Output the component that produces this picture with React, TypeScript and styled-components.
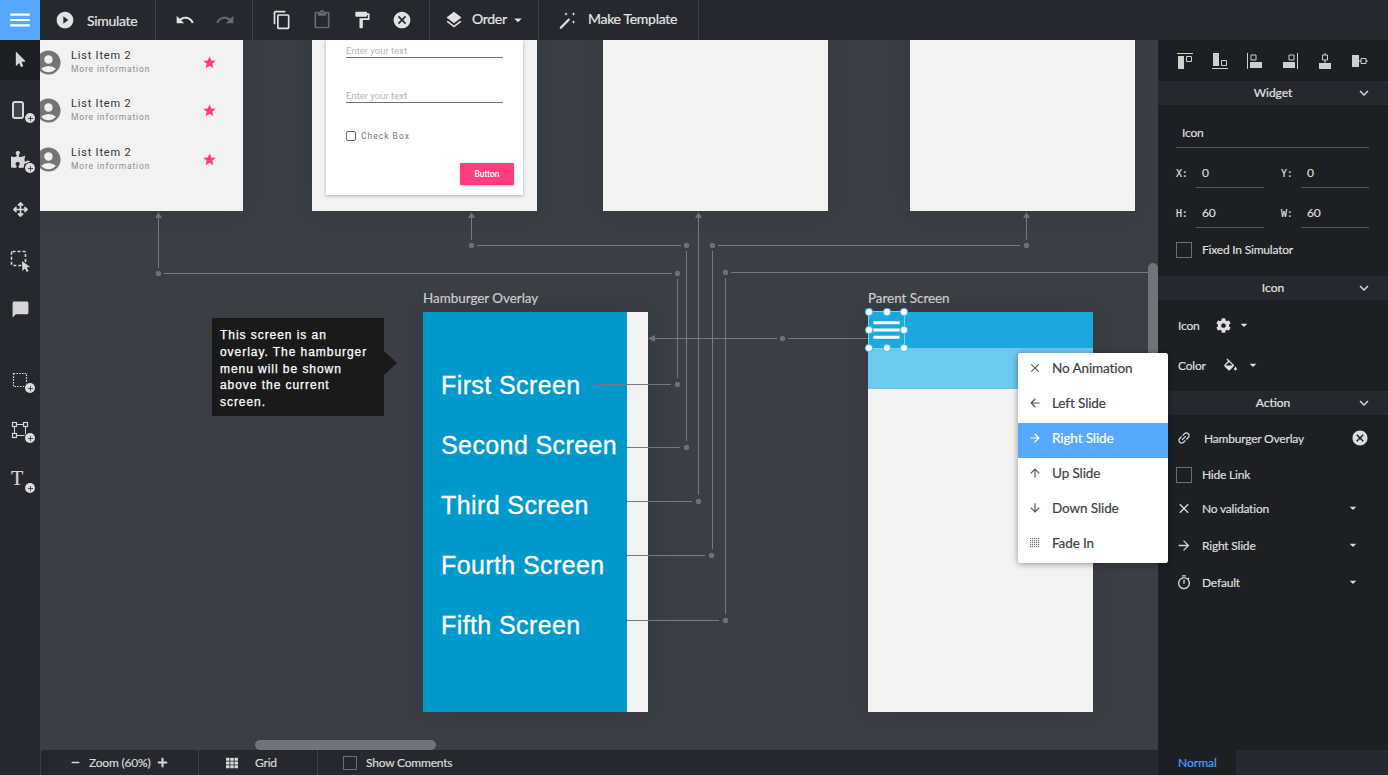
import React from 'react';
import styled, { createGlobalStyle } from 'styled-components';
import {
    MdAccountCircle,
    MdArrowBack,
    MdArrowDownward,
    MdArrowDropDown,
    MdArrowForward,
    MdArrowUpward,
    MdAdd,
    MdCancel,
    MdChatBubble,
    MdClose,
    MdContentCopy,
    MdContentPaste,
    MdFormatPaint,
    MdKeyboardArrowDown,
    MdLayers,
    MdLink,
    MdMenu,
    MdOutlineTimer,
    MdPlayCircleFilled,
    MdRedo,
    MdStar,
    MdUndo,
} from 'react-icons/md';
import { FaArrowsAlt, FaCog, FaMinus, FaMousePointer, FaPlus, FaPuzzlePiece, FaTh } from 'react-icons/fa';

const UI_FONT = `Lato, "Noto Sans", sans-serif`;
const PANEL = '#1c2025';
const BAR = '#25292f';
const ICON = '#e2e2e2';

const GlobalStyle = createGlobalStyle`
    html, body {
        margin: 0;
        padding: 0;
        height: 100%;
        overflow: hidden;
        background: #3a3e45;
    }
    * {
        box-sizing: border-box;
    }
`;

const Page = styled.div`
    position: relative;
    display: grid;
    grid-template-columns: 40px 1fr 230px;
    grid-template-rows: 40px 1fr;
    width: 1388px;
    height: 775px;
    overflow: hidden;
    font-family: ${UI_FONT};
    color: ${ICON};
    -webkit-text-stroke: 0.2px currentColor;
`;

const TopBar = styled.div`
    grid-column: 1 / 4;
    display: flex;
    align-items: stretch;
    height: 40px;
    background: ${BAR};
`;

const MenuButton = styled.div`
    display: flex;
    align-items: center;
    justify-content: center;
    width: 40px;
    background: #56a9ff;
    color: #fff;
`;

const TopGroup = styled.div<{ $width: number; $gap?: number; $pad?: number }>`
    display: flex;
    align-items: center;
    width: ${p => p.$width}px;
    padding-left: ${p => p.$pad ?? 0}px;
    gap: ${p => p.$gap ?? 0}px;
    border-right: 1px solid #3c4046;
`;

const TopLabel = styled.span<{ $left?: number; $lift?: number }>`
    margin-left: ${p => p.$left ?? 0}px;
    margin-bottom: ${p => p.$lift ?? 0}px;
    font-size: 14px;
    letter-spacing: -0.3px;
    color: #e4e4e4;
    white-space: nowrap;
`;

const Dim = styled.span`
    display: inline-flex;
    opacity: 0.35;
`;

const SideBar = styled.div`
    display: flex;
    flex-direction: column;
    gap: 10px;
    background: ${BAR};
`;

const Tool = styled.div<{ $active?: boolean; $spaced?: boolean }>`
    position: relative;
    display: flex;
    flex: none;
    align-items: center;
    justify-content: center;
    height: 40px;
    padding-bottom: 1px;
    margin-top: ${p => (p.$spaced ? 20 : 0)}px;
    background: ${p => (p.$active ? PANEL : 'transparent')};
    color: #d6d6d6;
`;

const PlusBadge = styled.span`
    position: absolute;
    right: 5px;
    top: 23px;
    display: flex;
    align-items: center;
    justify-content: center;
    width: 10px;
    height: 10px;
    border-radius: 50%;
    background: #dcdcdc;
    box-shadow: 0 0 0 1px ${BAR};
    color: #24282f;
`;

const Middle = styled.div`
    display: flex;
    flex-direction: column;
    min-width: 0;
`;

const Canvas = styled.div`
    position: relative;
    flex: 1;
    overflow: hidden;
    background: #3a3e45;
`;

const Lines = styled.svg`
    position: absolute;
    left: 0;
    top: 0;
    width: 100%;
    height: 100%;
`;

const Screen = styled.div<{ $x: number; $y: number }>`
    position: absolute;
    left: ${p => p.$x - 40}px;
    top: ${p => p.$y - 40}px;
    display: flex;
    flex-direction: column;
    width: 225px;
    height: 400px;
    background: #f2f2f2;
    box-shadow: 0 0 24px rgba(0, 0, 0, 0.1);
    -webkit-text-stroke: 0;
`;

const ScreenTitle = styled.div<{ $x: number; $y: number }>`
    position: absolute;
    left: ${p => p.$x - 40}px;
    top: ${p => p.$y - 40}px;
    font-size: 13.4px;
    line-height: 16px;
    color: #cfcfcf;
`;

const ListScreen = styled(Screen)`
    justify-content: flex-end;
    padding: 0 0 27px 16px;
`;

const ListRow = styled.div`
    display: flex;
    align-items: center;
    height: 48.75px;
    font-family: Roboto, sans-serif;
`;

const ListText = styled.div`
    display: flex;
    flex-direction: column;
    width: 130.5px;
    margin-left: 8px;
`;

const ListTitle = styled.div`
    font-size: 11px;
    line-height: 14px;
    letter-spacing: 0.8px;
    color: #333;
`;

const ListSub = styled.div`
    font-size: 8.5px;
    line-height: 13px;
    letter-spacing: 0.85px;
    color: #8a8f99;
`;

const FormCard = styled.div`
    display: flex;
    flex-direction: column;
    height: 155px;
    margin: auto 14px 16px;
    padding: 0 9px 0 20px;
    background: #fff;
    box-shadow: 0 1px 3px rgba(0, 0, 0, 0.3);
    font-family: Roboto, sans-serif;
`;

const FormInput = styled.div`
    width: 157px;
    height: 18px;
    margin-bottom: 27px;
    border-bottom: 1px solid #6f6f6f;
    font-size: 9.5px;
    line-height: 22px;
    color: #b5b5b5;
`;

const FormCheckRow = styled.div`
    display: flex;
    align-items: center;
    gap: 5px;
    margin-top: 1px;
    font-size: 8.5px;
    letter-spacing: 1px;
    color: #777;
`;

const FormCheck = styled.span`
    width: 10px;
    height: 10px;
    border: 1px solid #666;
    border-radius: 2px;
`;

const PinkButton = styled.div`
    align-self: flex-end;
    width: 54px;
    height: 22px;
    margin-top: 22px;
    border-radius: 1px;
    background: #ff3d7f;
    box-shadow: 0 1px 2px rgba(0, 0, 0, 0.25);
    font-size: 8.5px;
    font-weight: 500;
    line-height: 22px;
    text-align: center;
    color: #fff;
`;

const OverlayPanel = styled.div`
    display: flex;
    flex-direction: column;
    width: 204px;
    height: 100%;
    padding: 43px 0 0 18px;
    background: #0099cc;
`;

const OverlayLink = styled.div`
    height: 60px;
    font-family: 'Liberation Sans', Arial, sans-serif;
    font-size: 25px;
    line-height: 60px;
    letter-spacing: 0.4px;
    white-space: nowrap;
    color: #fff;
    -webkit-text-stroke: 0.35px #fff;
`;

const Note = styled.div`
    position: absolute;
    left: 172px;
    top: 278px;
    width: 172px;
    height: 98px;
    padding: 9px 8px;
    background: #1a1a1a;
    font-family: 'Liberation Sans', Arial, sans-serif;
    font-size: 12px;
    line-height: 16.8px;
    letter-spacing: 0.95px;
    color: #fff;
    -webkit-text-stroke: 0.25px #fff;
    &::after {
        content: '';
        position: absolute;
        left: 100%;
        top: 33px;
        border-left: 13px solid #1a1a1a;
        border-top: 12.5px solid transparent;
        border-bottom: 12.5px solid transparent;
    }
`;

const ParentHeader = styled.div`
    position: relative;
    flex: none;
    height: 36px;
    background: #1ba8dc;
`;

const ParentBand = styled.div`
    flex: none;
    height: 41px;
    background: #6bc8ee;
`;

const Selection = styled.div`
    position: absolute;
    left: 0;
    top: -1px;
    display: flex;
    align-items: center;
    justify-content: center;
    width: 37px;
    height: 38px;
    border: 1px solid #7fd4f5;
    color: #fff;
`;

const Handle = styled.span<{ $x: number; $y: number }>`
    position: absolute;
    left: ${p => p.$x}%;
    top: ${p => p.$y}%;
    width: 6px;
    height: 6px;
    margin: -3px 0 0 -3px;
    border-radius: 50%;
    background: #fff;
    box-shadow: 0 0 0 1px #4fc3ef;
`;

const VScroll = styled.div`
    position: absolute;
    right: 0;
    top: 223px;
    width: 10px;
    height: 100px;
    border-radius: 5px 5px 0 0;
    background: #70757a;
`;

const HScroll = styled.div`
    position: absolute;
    left: 215px;
    bottom: 0;
    width: 181px;
    height: 10px;
    border-radius: 5px;
    background: #70757a;
`;

const BottomBar = styled.div`
    display: flex;
    align-items: stretch;
    flex: none;
    height: 25px;
    background: ${BAR};
`;

const BottomGroup = styled.div<{ $width: number; $pad: number }>`
    display: flex;
    align-items: center;
    width: ${p => p.$width}px;
    padding-left: ${p => p.$pad}px;
    border-left: 1px solid #3c4046;
    font-size: 12px;
    letter-spacing: -0.2px;
    color: #d8d8d8;
    white-space: nowrap;
`;

const BottomText = styled.span<{ $left: number; $right?: number }>`
    margin-left: ${p => p.$left}px;
    margin-right: ${p => p.$right ?? 0}px;
`;

const SmallCheck = styled.span`
    flex: none;
    width: 14px;
    height: 14px;
    border: 1px solid #6c6f73;
`;

const RightPanel = styled.div`
    display: flex;
    flex-direction: column;
    background: ${PANEL};
`;

const AlignRow = styled.div`
    display: flex;
    align-items: center;
    justify-content: space-between;
    flex: none;
    height: 41px;
    padding: 0 19px 0 18px;
`;

const SectionHeader = styled.div<{ $top?: number }>`
    position: relative;
    flex: none;
    height: 24px;
    margin-top: ${p => p.$top ?? 0}px;
    background: ${BAR};
    font-size: 12px;
    line-height: 24px;
    text-align: center;
    color: #e2e2e2;
`;

const Chevron = styled.span`
    position: absolute;
    right: 15px;
    top: 3px;
    display: flex;
    color: #d8d8d8;
`;

const WidgetBody = styled.div`
    display: flex;
    flex-direction: column;
    padding: 0 19px 0 18px;
    font-size: 12px;
    letter-spacing: -0.2px;
    color: #dedede;
`;

const NameField = styled.div`
    height: 24px;
    margin-top: 19px;
    padding: 0 0 0 6px;
    border-bottom: 1px solid #53565a;
    line-height: 18px;
`;

const CoordGrid = styled.div`
    display: grid;
    grid-template-columns: 88px 88px;
    justify-content: space-between;
`;

const CoordCell = styled.div`
    display: flex;
    align-items: flex-end;
    height: 40px;
`;

const CoordLabel = styled.span`
    width: 20px;
    height: 28px;
    font-family: 'DejaVu Sans Mono', 'Liberation Mono', monospace;
    font-size: 10px;
    line-height: 28px;
`;

const CoordValue = styled.span`
    flex: 1;
    height: 28px;
    padding-left: 6px;
    border-bottom: 1px solid #53565a;
    line-height: 26px;
`;

const CheckRow = styled.div<{ $top: number }>`
    display: flex;
    align-items: center;
    gap: 10px;
    height: 16px;
    margin-top: ${p => p.$top}px;
`;

const CheckLabel = styled.span`
    margin-bottom: 2px;
`;

const PanelCheck = styled.span`
    flex: none;
    width: 16px;
    height: 16px;
    border: 1px solid #6c6f73;
`;

const PickRow = styled.div<{ $top: number; $gap: number }>`
    display: flex;
    align-items: center;
    gap: ${p => p.$gap}px;
    height: 20px;
    margin-top: ${p => p.$top}px;
    padding: 0 0 2px 2px;
`;

const PickCaret = styled.span<{ $left: number }>`
    display: flex;
    margin-left: ${p => p.$left}px;
`;

const SelectRow = styled.div<{ $top: number; $gap?: number }>`
    display: flex;
    align-items: center;
    gap: ${p => p.$gap ?? 10}px;
    height: 20px;
    margin-top: ${p => p.$top}px;
    padding-bottom: 2px;
    color: #dedede;
`;

const SelectIcon = styled.span`
    display: flex;
    justify-content: center;
    width: 16px;
    color: #d8d8d8;
`;

const SelectText = styled.span`
    flex: 1;
`;

const SelectCaret = styled.span`
    display: flex;
    margin-right: 8px;
    color: #d8d8d8;
`;

const ModeBar = styled.div`
    display: flex;
    flex: none;
    height: 25px;
    margin-top: auto;
    background: ${BAR};
`;

const ModeTab = styled.div`
    width: 78px;
    padding-left: 20px;
    background: ${PANEL};
    font-size: 12px;
    line-height: 25px;
    color: #4a9eff;
`;

const PopMenu = styled.div`
    position: absolute;
    left: 1018px;
    top: 353px;
    width: 150px;
    border-radius: 3px;
    overflow: hidden;
    background: #fff;
    box-shadow: 0 1px 6px rgba(0, 0, 0, 0.4);
`;

const PopItem = styled.div<{ $active?: boolean }>`
    display: flex;
    align-items: center;
    height: 35px;
    padding: 0 0 6px 10px;
    background: ${p => (p.$active ? '#56a9ff' : '#fff')};
    font-size: 13.5px;
    letter-spacing: -0.1px;
    color: ${p => (p.$active ? '#fff' : '#3a3f47')};
    svg {
        color: ${p => (p.$active ? '#fff' : '#555')};
    }
`;

const PopIcon = styled.span`
    display: flex;
    justify-content: center;
    width: 14px;
    margin-right: 10px;
`;

const SerifT = styled.span`
    margin: -4px 6px 0 0;
    font-family: 'Liberation Serif', serif;
    font-size: 20px;
    line-height: 20px;
    color: #d6d6d6;
`;

const Dot = ({ x, y }: { x: number; y: number }) => <circle cx={x} cy={y} r={2.7} fill="#707070" />;

const Seg = ({ d }: { d: string }) => <path d={d} stroke="#77797c" strokeWidth={1} fill="none" />;

const Arrow = ({ points }: { points: string }) => <polygon points={points} fill="#707070" />;

const connectorLines = [
    'M158.5 216V268 M164 273.5H672 M677.5 279V378 M595 384.5H671',
    'M471.5 216V240 M477 245.5H681 M686.5 251V441 M627 447.5H680',
    'M698.5 216V495 M627 501.5H692',
    'M1026.5 216V240 M1020 245.5H718 M712.5 251V549 M627 555.5H705',
    'M731 272.5H1158 M725.5 278V614 M627 620.5H719',
    'M655 338.5H777 M788 338.5H868',
];

const connectorDots = [
    [158.5, 273.5], [677.5, 273.5], [677.5, 384.5],
    [471.5, 245.5], [686.5, 245.5], [686.5, 447.5],
    [698.5, 501.5],
    [1026.5, 245.5], [712.5, 245.5], [711.5, 555.5],
    [725.5, 272.5], [725.5, 620.5],
    [782.5, 338.5],
];

const Connectors = () => (
    <Lines>
        <g transform="translate(-40 -40)">
            {connectorLines.map(d => (
                <Seg key={d} d={d} />
            ))}
            {connectorDots.map(([x, y]) => (
                <Dot key={`${x}-${y}`} x={x} y={y} />
            ))}
            <Arrow points="158.5,212 155,218 162,218" />
            <Arrow points="471.5,212 468,218 475,218" />
            <Arrow points="698.5,212 695,218 702,218" />
            <Arrow points="1026.5,212 1023,218 1030,218" />
            <Arrow points="648,338.5 655,335 655,342" />
        </g>
    </Lines>
);

const Plus = () => (
    <PlusBadge>
        <MdAdd size={9} />
    </PlusBadge>
);

const PhoneIcon = () => (
    <svg width="12" height="18" viewBox="0 0 12 18" style={{ marginRight: 4 }}>
        <rect x="1" y="1" width="10" height="16" rx="2" fill="#3f444b" stroke="currentColor" strokeWidth="2" />
    </svg>
);

const SelectPointerIcon = () => (
    <svg width="24" height="24" viewBox="0 0 24 24">
        <rect x="3.5" y="3.5" width="14" height="14" rx="1" fill="none" stroke="currentColor" strokeWidth="1.6" strokeDasharray="3 2" />
        <path d="M14 13l8 6-3.4.6 2 3.4-1.8 1-2-3.4L14.4 23z" fill="currentColor" />
    </svg>
);

const DottedRectIcon = () => (
    <svg width="16" height="16" viewBox="0 0 16 16">
        <rect x="1.5" y="1.5" width="13" height="13" fill="none" stroke="currentColor" strokeWidth="1.2" strokeDasharray="1.6 1.2" />
    </svg>
);

const NodesIcon = () => (
    <svg width="18" height="18" viewBox="0 0 18 18" fill="none" stroke="currentColor">
        <rect x="3.5" y="3.5" width="11" height="11" strokeWidth="1" />
        <rect x="1.5" y="1.5" width="4" height="4" fill="#25292f" strokeWidth="1.2" />
        <rect x="12.5" y="1.5" width="4" height="4" fill="#25292f" strokeWidth="1.2" />
        <rect x="1.5" y="12.5" width="4" height="4" fill="#25292f" strokeWidth="1.2" />
    </svg>
);

const WandIcon = () => (
    <svg width="20" height="20" viewBox="0 0 20 20" fill="currentColor">
        <path d="M10.6 8.2l1.6 1.6L3.6 18.6c-.4.4-1 .4-1.4 0l-.2-.2c-.4-.4-.4-1 0-1.4z" />
        <path d="M8 2.2l.6 1.2 1.2.6-1.2.6L8 5.8l-.6-1.2-1.2-.6 1.2-.6zM15.5 2.2l.6 1.2 1.2.6-1.2.6-.6 1.2-.6-1.2-1.2-.6 1.2-.6zM15.5 10.2l.6 1.2 1.2.6-1.2.6-.6 1.2-.6-1.2-1.2-.6 1.2-.6z" />
    </svg>
);

const BucketIcon = () => (
    <svg width="17" height="17" viewBox="0 0 24 20" fill="currentColor">
        <path d="M16.56 8.94L7.62 0 6.21 1.41l2.38 2.38-5.15 5.15c-.59.59-.59 1.54 0 2.12l5.5 5.5c.29.29.68.44 1.06.44s.77-.15 1.06-.44l5.5-5.5c.59-.58.59-1.53 0-2.12zM5.21 10L10 5.21 14.79 10H5.21zM19 11.5s-2 2.17-2 3.5c0 1.1.9 2 2 2s2-.9 2-2c0-1.33-2-3.5-2-3.5z" />
    </svg>
);

const alignIcons = [
    'M1 1.5h16 M2 4h6v13H2z M10.5 4.5h5v5h-5z',
    'M1 16.5h16 M2 1h6v13H2z M10.5 8.5h5v5h-5z',
    'M1.5 1v16 M4 10h12v6H4z M5 3h5v5H5z',
    'M16.5 1v16 M2 10h12v6H2z M8 3h5v5H8z',
    'M3 11h12v6H3z M6.5 3h5v5h-5z M9 1v2 M9 8v3',
    'M1 3h7v12H1z M10 6.5h5v5h-5z M8 9h2 M15 9h2',
];

const AlignIcon = ({ d }: { d: string }) => {
    const parts = d.split(' M').map((part, i) => (i === 0 ? part : `M${part}`));
    return (
        <svg width="18" height="18" viewBox="0 0 18 18">
            {parts.map(part =>
                part.includes('z') && !part.includes('h5') ? (
                    <path key={part} d={part} fill="#cfcfcf" />
                ) : (
                    <path key={part} d={part} fill="none" stroke="#cfcfcf" strokeWidth={1} />
                ),
            )}
        </svg>
    );
};

const FadeIcon = () => (
    <svg width="10" height="10" viewBox="0 0 10 10" fill="#777">
        {[0, 2, 4, 6, 8].map(y =>
            [0, 2, 4, 6, 8].map(x => <rect key={`${x}${y}`} x={x} y={y} width="1.2" height="1.2" />),
        )}
    </svg>
);

const menuItems = [
    { label: 'No Animation', icon: <MdClose size={14} /> },
    { label: 'Left Slide', icon: <MdArrowBack size={14} /> },
    { label: 'Right Slide', icon: <MdArrowForward size={14} />, active: true },
    { label: 'Up Slide', icon: <MdArrowUpward size={14} /> },
    { label: 'Down Slide', icon: <MdArrowDownward size={14} /> },
    { label: 'Fade In', icon: <FadeIcon /> },
];

const handles = [
    [0, 0], [50, 0], [100, 0],
    [0, 50], [100, 50],
    [0, 100], [50, 100], [100, 100],
];

const overlayLinks = ['First Screen', 'Second Screen', 'Third Screen', 'Fourth Screen', 'Fifth Screen'];

const App = () => (
    <Page>
        <GlobalStyle />
        <TopBar>
            <MenuButton>
                <MdMenu size={26} />
            </MenuButton>
            <TopGroup $width={116} $pad={15}>
                <MdPlayCircleFilled size={20} />
                <TopLabel $left={12}>Simulate</TopLabel>
            </TopGroup>
            <TopGroup $width={97} $pad={19} $gap={20}>
                <MdUndo size={20} />
                <Dim>
                    <MdRedo size={20} />
                </Dim>
            </TopGroup>
            <TopGroup $width={177} $pad={19} $gap={20}>
                <MdContentCopy size={20} />
                <Dim>
                    <MdContentPaste size={20} />
                </Dim>
                <MdFormatPaint size={20} />
                <MdCancel size={20} />
            </TopGroup>
            <TopGroup $width={109} $pad={14}>
                <MdLayers size={20} />
                <TopLabel $left={8} $lift={3}>
                    Order
                </TopLabel>
                <MdArrowDropDown size={18} style={{ marginLeft: 2 }} />
            </TopGroup>
            <TopGroup $width={160} $pad={19}>
                <WandIcon />
                <TopLabel $left={10} $lift={3}>
                    Make Template
                </TopLabel>
            </TopGroup>
        </TopBar>
        <SideBar>
            <Tool $active>
                <FaMousePointer size={15} />
            </Tool>
            <Tool>
                <PhoneIcon />
                <Plus />
            </Tool>
            <Tool>
                <FaPuzzlePiece size={19} />
                <Plus />
            </Tool>
            <Tool>
                <FaArrowsAlt size={15} />
            </Tool>
            <Tool>
                <SelectPointerIcon />
            </Tool>
            <Tool>
                <MdChatBubble size={19} />
            </Tool>
            <Tool $spaced>
                <DottedRectIcon />
                <Plus />
            </Tool>
            <Tool>
                <NodesIcon />
                <Plus />
            </Tool>
            <Tool>
                <SerifT>T</SerifT>
                <Plus />
            </Tool>
        </SideBar>
        <Middle>
            <Canvas>
                <ListScreen $x={18} $y={-189}>
                    {[0, 1, 2].map(i => (
                        <ListRow key={i}>
                            <MdAccountCircle size={29} color="#757575" />
                            <ListText>
                                <ListTitle>List Item 2</ListTitle>
                                <ListSub>More information</ListSub>
                            </ListText>
                            <MdStar size={15} color="#ff3d7f" />
                        </ListRow>
                    ))}
                </ListScreen>
                <Screen $x={312} $y={-189}>
                    <FormCard>
                        <FormInput>Enter your text</FormInput>
                        <FormInput>Enter your text</FormInput>
                        <FormCheckRow>
                            <FormCheck />
                            Check Box
                        </FormCheckRow>
                        <PinkButton>Button</PinkButton>
                    </FormCard>
                </Screen>
                <Screen $x={603} $y={-189} />
                <Screen $x={910} $y={-189} />
                <ScreenTitle $x={423} $y={290}>
                    Hamburger Overlay
                </ScreenTitle>
                <Screen $x={423} $y={312}>
                    <OverlayPanel>
                        {overlayLinks.map(link => (
                            <OverlayLink key={link}>{link}</OverlayLink>
                        ))}
                    </OverlayPanel>
                </Screen>
                <ScreenTitle $x={868} $y={290}>
                    Parent Screen
                </ScreenTitle>
                <Screen $x={868} $y={312}>
                    <ParentHeader>
                        <Selection>
                            <MdMenu size={36} />
                            {handles.map(([x, y]) => (
                                <Handle key={`${x}-${y}`} $x={x} $y={y} />
                            ))}
                        </Selection>
                    </ParentHeader>
                    <ParentBand />
                </Screen>
                <Connectors />
                <Note>This screen is an overlay. The hamburger menu will be shown above the current screen.</Note>
                <VScroll />
                <HScroll />
            </Canvas>
            <BottomBar>
                <BottomGroup $width={158} $pad={30}>
                    <FaMinus size={9} />
                    <BottomText $left={9} $right={7}>
                        Zoom (60%)
                    </BottomText>
                    <FaPlus size={11} />
                </BottomGroup>
                <BottomGroup $width={119} $pad={27}>
                    <FaTh size={12} />
                    <BottomText $left={17}>Grid</BottomText>
                </BottomGroup>
                <BottomGroup $width={300} $pad={25}>
                    <SmallCheck />
                    <BottomText $left={9}>Show Comments</BottomText>
                </BottomGroup>
            </BottomBar>
        </Middle>
        <RightPanel>
            <AlignRow>
                {alignIcons.map(d => (
                    <AlignIcon key={d} d={d} />
                ))}
            </AlignRow>
            <SectionHeader>
                Widget
                <Chevron>
                    <MdKeyboardArrowDown size={18} />
                </Chevron>
            </SectionHeader>
            <WidgetBody>
                <NameField>Icon</NameField>
                <CoordGrid>
                    <CoordCell>
                        <CoordLabel>X:</CoordLabel>
                        <CoordValue>0</CoordValue>
                    </CoordCell>
                    <CoordCell>
                        <CoordLabel>Y:</CoordLabel>
                        <CoordValue>0</CoordValue>
                    </CoordCell>
                    <CoordCell>
                        <CoordLabel>H:</CoordLabel>
                        <CoordValue>60</CoordValue>
                    </CoordCell>
                    <CoordCell>
                        <CoordLabel>W:</CoordLabel>
                        <CoordValue>60</CoordValue>
                    </CoordCell>
                </CoordGrid>
                <CheckRow $top={14}>
                    <PanelCheck />
                    <CheckLabel>Fixed In Simulator</CheckLabel>
                </CheckRow>
            </WidgetBody>
            <SectionHeader $top={18}>
                Icon
                <Chevron>
                    <MdKeyboardArrowDown size={18} />
                </Chevron>
            </SectionHeader>
            <WidgetBody>
                <PickRow $top={16} $gap={16}>
                    Icon
                    <FaCog size={15} />
                    <PickCaret $left={-11}>
                        <MdArrowDropDown size={16} />
                    </PickCaret>
                </PickRow>
                <PickRow $top={20} $gap={16}>
                    Color
                    <BucketIcon />
                    <PickCaret $left={-10}>
                        <MdArrowDropDown size={16} />
                    </PickCaret>
                </PickRow>
            </WidgetBody>
            <SectionHeader $top={15}>
                Action
                <Chevron>
                    <MdKeyboardArrowDown size={18} />
                </Chevron>
            </SectionHeader>
            <WidgetBody>
                <SelectRow $top={14} $gap={12}>
                    <SelectIcon>
                        <MdLink size={20} style={{ transform: 'rotate(-45deg)' }} />
                    </SelectIcon>
                    <SelectText>Hamburger Overlay</SelectText>
                    <MdCancel size={18} />
                </SelectRow>
                <CheckRow $top={18}>
                    <PanelCheck />
                    <CheckLabel>Hide Link</CheckLabel>
                </CheckRow>
                <SelectRow $top={16}>
                    <SelectIcon>
                        <MdClose size={17} />
                    </SelectIcon>
                    <SelectText>No validation</SelectText>
                    <SelectCaret>
                        <MdArrowDropDown size={16} />
                    </SelectCaret>
                </SelectRow>
                <SelectRow $top={17}>
                    <SelectIcon>
                        <MdArrowForward size={17} />
                    </SelectIcon>
                    <SelectText>Right Slide</SelectText>
                    <SelectCaret>
                        <MdArrowDropDown size={16} />
                    </SelectCaret>
                </SelectRow>
                <SelectRow $top={17}>
                    <SelectIcon>
                        <MdOutlineTimer size={19} />
                    </SelectIcon>
                    <SelectText>Default</SelectText>
                    <SelectCaret>
                        <MdArrowDropDown size={16} />
                    </SelectCaret>
                </SelectRow>
            </WidgetBody>
            <ModeBar>
                <ModeTab>Normal</ModeTab>
            </ModeBar>
        </RightPanel>
        <PopMenu>
            {menuItems.map(item => (
                <PopItem key={item.label} $active={item.active}>
                    <PopIcon>{item.icon}</PopIcon>
                    {item.label}
                </PopItem>
            ))}
        </PopMenu>
    </Page>
);

export default App;
